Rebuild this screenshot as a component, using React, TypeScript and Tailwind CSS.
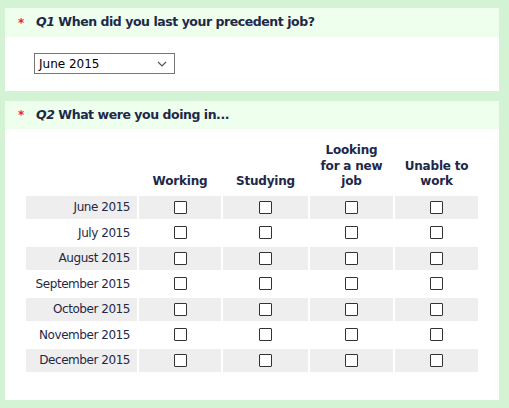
import React from "react";

const months = [
  "June 2015",
  "July 2015",
  "August 2015",
  "September 2015",
  "October 2015",
  "November 2015",
  "December 2015",
];

const cols = [
  { label: ["Working"], w: "w-[82px]" },
  { label: ["Studying"], w: "w-[85px]" },
  { label: ["Looking", "for a new", "job"], w: "w-[83px]" },
  { label: ["Unable to", "work"], w: "w-[83px]" },
];

function Box() {
  return (
    <span className="inline-block w-[13px] h-[13px] border-[1.5px] border-[#333333] bg-white rounded-[1px] align-middle" />
  );
}

export default function App() {
  return (
    <div
      className="w-[509px] h-[408px] bg-[#d4f2d4] pt-[8px] pl-[5px] text-[#1e2848]"
      style={{ fontFamily: "Verdana, 'DejaVu Sans', sans-serif" }}
    >
      <div className="w-[494px] bg-white">
        <div className="h-[29px] bg-[#eeffee] flex items-center pl-[13px] text-[12.5px] font-bold tracking-[-0.45px]">
          <span className="text-[#ff1744] text-[12px] w-[18px]">*</span>
          <span>
            <i>Q1</i> When did you last your precedent job?
          </span>
        </div>
        <div className="h-[54px] pt-[16px] pl-[29px]">
          <div className="w-[141px] h-[21px] border border-[#767676] flex items-center justify-between pl-[4px] pr-[7px] text-[12px] text-black bg-white">
            <span>June 2015</span>
            <svg width="10" height="6" viewBox="0 0 10 6">
              <path d="M1 1 L5 5 L9 1" fill="none" stroke="#555" strokeWidth="1.2" />
            </svg>
          </div>
        </div>
      </div>

      <div className="w-[494px] bg-white mt-[10px] h-[299px]">
        <div className="h-[28px] bg-[#eeffee] flex items-center pl-[13px] text-[12.5px] font-bold tracking-[-0.45px]">
          <span className="text-[#ff1744] text-[12px] w-[18px]">*</span>
          <span>
            <i>Q2</i> What were you doing in...
          </span>
        </div>
        <div className="pl-[19px] pt-[12px]">
          <table className="border-separate border-spacing-[2px] text-[12px]">
            <thead>
              <tr>
                <th className="w-[111px]" />
                {cols.map((c, i) => (
                  <th
                    key={i}
                    className={`${c.w} align-bottom text-center font-bold leading-[15.5px] pb-[4px] tracking-[-0.2px]`}
                  >
                    {c.label.map((l, j) => (
                      <div key={j}>{l}</div>
                    ))}
                  </th>
                ))}
              </tr>
            </thead>
            <tbody>
              {months.map((m, r) => {
                const bg = r % 2 === 0 ? "bg-[#eeeeee]" : "bg-white";
                return (
                  <tr key={m} className="h-[23.5px]">
                    <td className={`${bg} text-right pr-[7px] p-0 leading-none tracking-[-0.45px]`}>{m}</td>
                    {cols.map((c, i) => (
                      <td key={i} className={`${bg} text-center p-0 leading-none`}>
                        <Box />
                      </td>
                    ))}
                  </tr>
                );
              })}
            </tbody>
          </table>
        </div>
      </div>
    </div>
  );
}
